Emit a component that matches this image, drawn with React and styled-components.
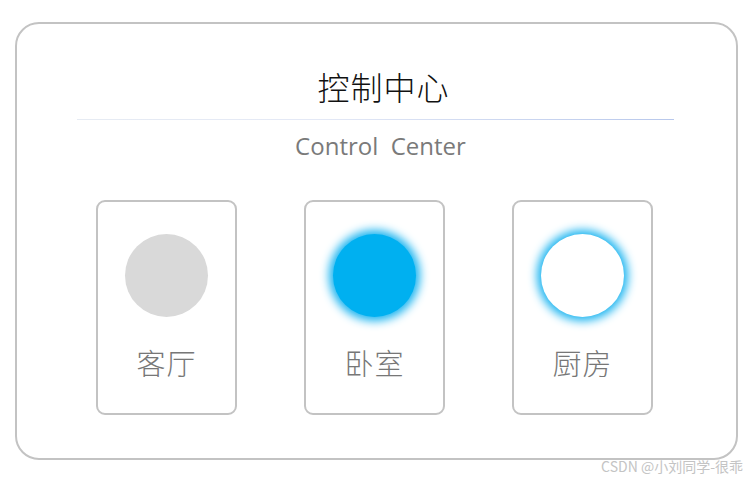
import React from 'react'
import styled, { createGlobalStyle } from 'styled-components'

const GlobalStyle = createGlobalStyle`
    body {
        margin: 0;
        background: #fff;
        font-family: "Noto Sans", "Noto Sans CJK SC", sans-serif;
    }
`

const Page = styled.div`
    width: 750px;
    height: 481px;
    position: relative;
    overflow: hidden;
`

const Panel = styled.div`
    box-sizing: border-box;
    width: 723px;
    height: 438px;
    margin: 22px 0 0 15px;
    border: 2px solid #c3c3c3;
    border-radius: 24px;
    display: flex;
    flex-direction: column;
    align-items: center;
`

const Title = styled.h1`
    margin: 42px 0 0;
    padding-left: 14px;
    font-family: "Noto Sans CJK SC", sans-serif;
    font-weight: 300;
    font-size: 32px;
    line-height: 40px;
    color: #111;
    letter-spacing: 1px;
`

const Divider = styled.div`
    width: 597px;
    height: 1px;
    margin: 13px 3px 0 0;
    background: linear-gradient(to right, #e6ebf3, #e4e9f6 40%, #b8c8ec);
`

const Subtitle = styled.div`
    margin-top: 11px;
    padding-left: 8px;
    font-family: "Open Sans", "Noto Sans", sans-serif;
    font-size: 24px;
    line-height: 30px;
    color: #7a7a7a;
    white-space: pre;
`

const Rooms = styled.div`
    display: flex;
    gap: 67px;
    margin: 39px 4px 0 0;
`

const Card = styled.div`
    box-sizing: border-box;
    width: 141px;
    height: 215px;
    border: 2px solid #c3c3c3;
    border-radius: 9px;
    display: flex;
    flex-direction: column;
    align-items: center;
    padding-top: 32px;
`

const Lamp = styled.div`
    width: 83px;
    height: 83px;
    border-radius: 50%;
    background: ${p => p.$color};
    box-shadow: ${p => p.$glow ? '0 0 10px 4px #1ab4f0' : 'none'};
`

const Label = styled.div`
    margin-top: 27px;
    font-family: "Noto Sans CJK SC", sans-serif;
    font-weight: 300;
    font-size: 29px;
    line-height: 36px;
    color: #777;
    letter-spacing: 1px;
`

const Watermark = styled.div`
    position: absolute;
    right: 7px;
    bottom: 5px;
    font-family: "Noto Sans CJK SC", sans-serif;
    font-size: 14px;
    color: #c4c4c4;
`

const rooms = [
    { name: '客厅', color: '#d9d9d9', glow: false },
    { name: '卧室', color: '#00b0f0', glow: true },
    { name: '厨房', color: '#ffffff', glow: true },
]

export default function App() {
    return (
        <Page>
            <GlobalStyle />
            <Panel>
                <Title>控制中心</Title>
                <Divider />
                <Subtitle>{'Control  Center'}</Subtitle>
                <Rooms>
                    {rooms.map(r => (
                        <Card key={r.name}>
                            <Lamp $color={r.color} $glow={r.glow} />
                            <Label>{r.name}</Label>
                        </Card>
                    ))}
                </Rooms>
            </Panel>
            <Watermark>CSDN @小刘同学-很乖</Watermark>
        </Page>
    )
}
